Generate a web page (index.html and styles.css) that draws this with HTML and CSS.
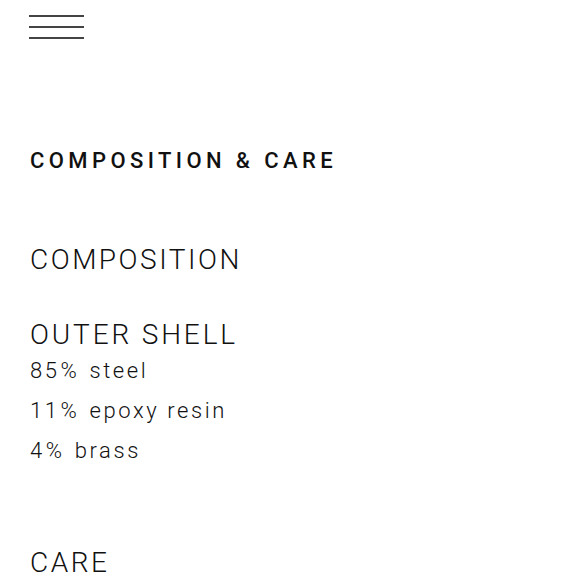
FILE: index.html
```html
<!DOCTYPE html>
<html>
<head>
<meta charset="utf-8">
<link rel="stylesheet" href="styles.css">
</head>
<body>
<div class="page">
  <button class="menu" aria-label="Menu">
    <span class="bar"></span>
    <span class="bar"></span>
    <span class="bar"></span>
  </button>
  <h1 class="title">COMPOSITION &amp; CARE</h1>
  <h2 class="section">COMPOSITION</h2>
  <div class="part">
    <h3 class="part-name">OUTER SHELL</h3>
    <ul class="materials">
      <li>85<span class="pct">%</span> steel</li>
      <li>11<span class="pct">%</span> epoxy resin</li>
      <li>4<span class="pct">%</span> brass</li>
    </ul>
  </div>
  <h2 class="section care">CARE</h2>
</div>
</body>
</html>
```
FILE: styles.css
```css
html, body {
  margin: 0;
  padding: 0;
  background: #ffffff;
}
.page {
  padding: 15px 30px 0 29px;
  font-family: Roboto, "Liberation Sans", sans-serif;
  color: #111111;
}
.menu {
  display: flex;
  flex-direction: column;
  gap: 9px;
  width: 55px;
  padding: 0;
  margin: 0;
  border: 0;
  background: none;
}
.bar {
  display: block;
  width: 55px;
  height: 2px;
  background: #444444;
}
.title {
  margin: 111px 0 0 1px;
  font-size: 22px;
  line-height: 22px;
  font-weight: 500;
  letter-spacing: 4.4px;
}
.section {
  margin: 74px 0 0 1px;
  font-size: 28px;
  line-height: 28px;
  font-weight: 300;
  letter-spacing: 2.5px;
}
.part {
  margin-top: 47px;
}
.part-name {
  margin: 0 0 0 1px;
  font-size: 28px;
  line-height: 28px;
  font-weight: 300;
  letter-spacing: 2.85px;
}
.materials {
  list-style: none;
  margin: 2px 0 0 1px;
  padding: 0;
  font-size: 22px;
  line-height: 40px;
  font-weight: 300;
  letter-spacing: 2.6px;
}
.pct {
  display: inline-block;
  margin: 0 2px 0 1px;
}
.care {
  margin-top: 78px;
}
```
